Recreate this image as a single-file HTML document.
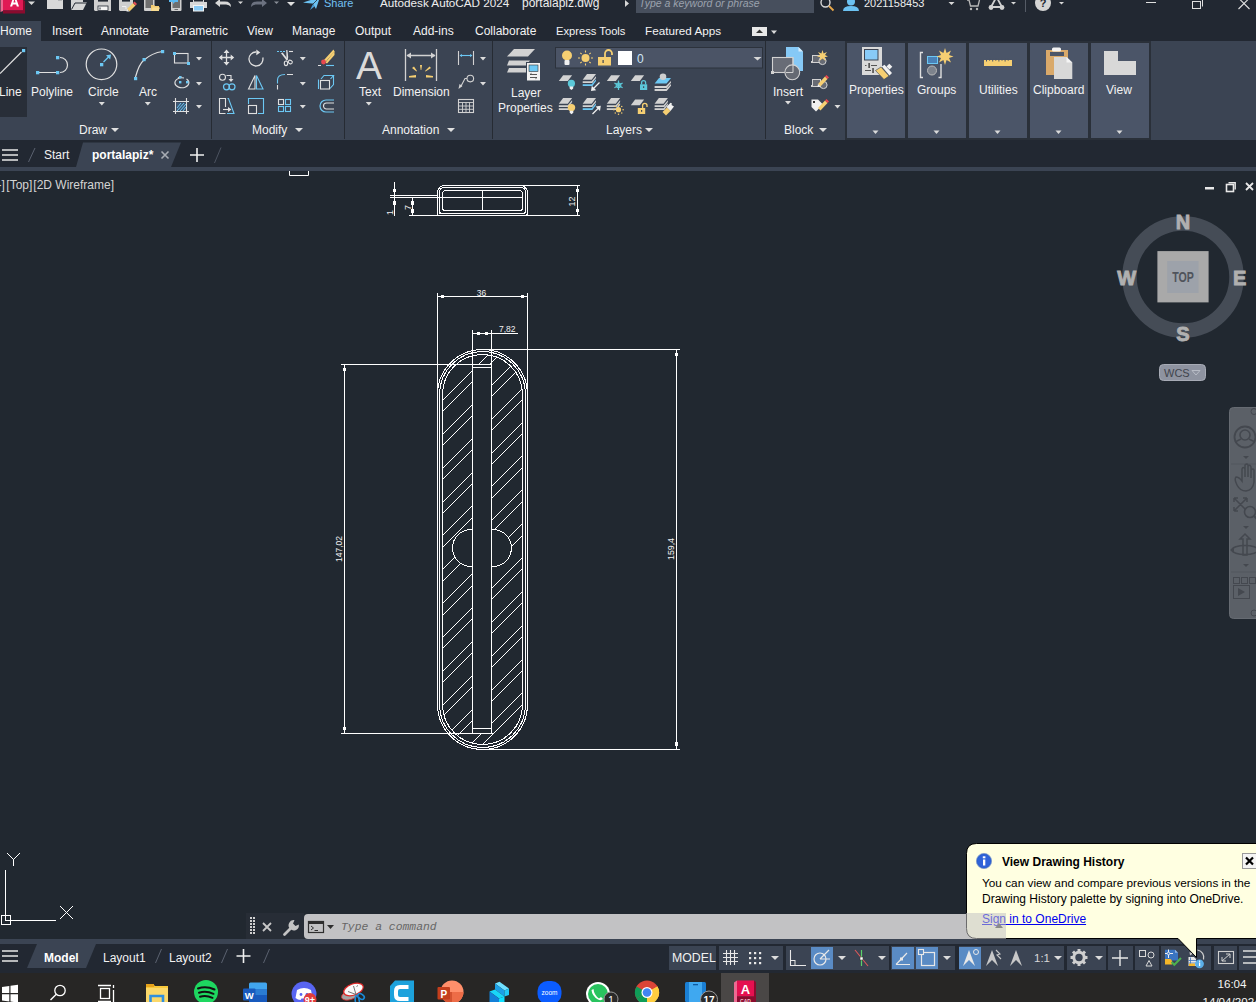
<!DOCTYPE html>
<html><head><meta charset="utf-8"><style>
html,body{margin:0;padding:0}
body{width:1256px;height:1002px;overflow:hidden;position:relative;background:#212830;font-family:"Liberation Sans",sans-serif}
.t{position:absolute;white-space:nowrap;z-index:3}
.r{position:absolute}
.s{position:absolute;overflow:visible}
</style></head><body>
<div class="r" style="left:0px;top:0px;width:1256px;height:21px;background:#222832;"></div>
<div class="r" style="left:0px;top:21px;width:1256px;height:20px;background:#222832;"></div>
<div class="r" style="left:0px;top:21px;width:41px;height:20px;background:#3b4453;"></div>
<div class="r" style="left:0px;top:41px;width:1256px;height:99px;background:#3b4453;"></div>
<div class="r" style="left:0px;top:140px;width:1256px;height:27px;background:#222832;"></div>
<div class="r" style="left:0px;top:167px;width:1256px;height:4px;background:#3b4453;"></div>
<div class="r" style="left:0px;top:171px;width:1256px;height:769px;background:#212830;"></div>
<div class="r" style="left:0px;top:939px;width:1256px;height:5px;background:#3b4453;"></div>
<div class="r" style="left:0px;top:944px;width:1256px;height:29px;background:#222832;"></div>
<div class="r" style="left:0px;top:973px;width:1256px;height:29px;background:#272625;"></div>
<div class="t" style="left:324px;top:-2.31px;font-size:11px;line-height:11px;color:#72c0f2;">Share</div>
<div class="t" style="left:380px;top:-2.90px;font-size:11.7px;line-height:11.7px;color:#eeeeee;">Autodesk AutoCAD 2024</div>
<div class="t" style="left:522px;top:-3.16px;font-size:12px;line-height:12px;color:#eeeeee;">portalapiz.dwg</div>
<div class="r" style="left:636px;top:0px;width:178px;height:13px;background:#474f5d;"></div>
<div class="t" style="left:639px;top:-1.89px;font-size:10.5px;line-height:10.5px;color:#9ba2ad;font-style:italic;">Type a keyword or phrase</div>
<div class="t" style="left:864px;top:-2.31px;font-size:11px;line-height:11px;color:#eeeeee;">2021158453</div>
<div class="t" style="left:0px;top:24.84px;font-size:12px;line-height:12px;color:#f2f2f2;">Home</div>
<div class="t" style="left:52px;top:24.84px;font-size:12px;line-height:12px;color:#f2f2f2;">Insert</div>
<div class="t" style="left:101px;top:24.84px;font-size:12px;line-height:12px;color:#f2f2f2;">Annotate</div>
<div class="t" style="left:170px;top:24.84px;font-size:12px;line-height:12px;color:#f2f2f2;">Parametric</div>
<div class="t" style="left:247px;top:24.84px;font-size:12px;line-height:12px;color:#f2f2f2;">View</div>
<div class="t" style="left:292px;top:24.84px;font-size:12px;line-height:12px;color:#f2f2f2;">Manage</div>
<div class="t" style="left:355px;top:24.84px;font-size:12px;line-height:12px;color:#f2f2f2;">Output</div>
<div class="t" style="left:413px;top:24.84px;font-size:12px;line-height:12px;color:#f2f2f2;">Add-ins</div>
<div class="t" style="left:475px;top:24.84px;font-size:12px;line-height:12px;color:#f2f2f2;">Collaborate</div>
<div class="t" style="left:556px;top:25.52px;font-size:11.2px;line-height:11.2px;color:#f2f2f2;">Express Tools</div>
<div class="t" style="left:645px;top:25.10px;font-size:11.7px;line-height:11.7px;color:#f2f2f2;">Featured Apps</div>
<div class="t" style="left:-1px;top:85.84px;font-size:12px;line-height:12px;color:#f2f2f2;">Line</div>
<div class="t" style="left:31px;top:85.84px;font-size:12px;line-height:12px;color:#f2f2f2;">Polyline</div>
<div class="t" style="left:88px;top:85.84px;font-size:12px;line-height:12px;color:#f2f2f2;">Circle</div>
<div class="t" style="left:139px;top:85.84px;font-size:12px;line-height:12px;color:#f2f2f2;">Arc</div>
<div class="t" style="left:359px;top:85.84px;font-size:12px;line-height:12px;color:#f2f2f2;">Text</div>
<div class="t" style="left:393px;top:85.84px;font-size:12px;line-height:12px;color:#f2f2f2;">Dimension</div>
<div class="t" style="left:773px;top:85.84px;font-size:12px;line-height:12px;color:#f2f2f2;">Insert</div>
<div class="t" style="left:511px;top:86.84px;font-size:12px;line-height:12px;color:#f2f2f2;">Layer</div>
<div class="t" style="left:498px;top:101.84px;font-size:12px;line-height:12px;color:#f2f2f2;">Properties</div>
<div class="t" style="left:79px;top:123.84px;font-size:12px;line-height:12px;color:#f2f2f2;">Draw</div>
<div class="t" style="left:252px;top:123.84px;font-size:12px;line-height:12px;color:#f2f2f2;">Modify</div>
<div class="t" style="left:382px;top:123.84px;font-size:12px;line-height:12px;color:#f2f2f2;">Annotation</div>
<div class="t" style="left:606px;top:123.84px;font-size:12px;line-height:12px;color:#f2f2f2;">Layers</div>
<div class="t" style="left:784px;top:123.84px;font-size:12px;line-height:12px;color:#f2f2f2;">Block</div>
<div class="r" style="left:211px;top:41px;width:1px;height:98px;background:#262b33;"></div>
<div class="r" style="left:344px;top:41px;width:1px;height:98px;background:#262b33;"></div>
<div class="r" style="left:492px;top:41px;width:1px;height:98px;background:#262b33;"></div>
<div class="r" style="left:765px;top:41px;width:1px;height:98px;background:#262b33;"></div>
<div class="r" style="left:845px;top:41px;width:62px;height:99px;background:#2a3039;"></div>
<div class="r" style="left:847px;top:43px;width:58px;height:95px;background:#4b5568;"></div>
<div class="t" style="left:849px;top:83.84px;font-size:12px;line-height:12px;color:#f2f2f2;">Properties</div>
<div class="r" style="left:906px;top:41px;width:62px;height:99px;background:#2a3039;"></div>
<div class="r" style="left:908px;top:43px;width:58px;height:95px;background:#4b5568;"></div>
<div class="t" style="left:917px;top:83.84px;font-size:12px;line-height:12px;color:#f2f2f2;">Groups</div>
<div class="r" style="left:967px;top:41px;width:62px;height:99px;background:#2a3039;"></div>
<div class="r" style="left:969px;top:43px;width:58px;height:95px;background:#4b5568;"></div>
<div class="t" style="left:979px;top:83.84px;font-size:12px;line-height:12px;color:#f2f2f2;">Utilities</div>
<div class="r" style="left:1028px;top:41px;width:62px;height:99px;background:#2a3039;"></div>
<div class="r" style="left:1030px;top:43px;width:58px;height:95px;background:#4b5568;"></div>
<div class="t" style="left:1033px;top:83.84px;font-size:12px;line-height:12px;color:#f2f2f2;">Clipboard</div>
<div class="r" style="left:1089px;top:41px;width:62px;height:99px;background:#2a3039;"></div>
<div class="r" style="left:1091px;top:43px;width:58px;height:95px;background:#4b5568;"></div>
<div class="t" style="left:1106px;top:83.84px;font-size:12px;line-height:12px;color:#f2f2f2;">View</div>
<svg class="s" style="left:0px;top:0px;z-index:1" width="1256" height="145" viewBox="0 0 1256 145"><rect x="0" y="47" width="27" height="70" fill="#282e38"/><line x1="0" y1="73.5" x2="21.5" y2="52" stroke="#e0e0e0" stroke-width="1.2"/><rect x="22" y="49" width="3.2" height="3.2" fill="#6cc8f4"/><path d="M39,72.5 H56 M60,57.5 A7.5,7.5 0 0 1 60,72.5" fill="none" stroke="#e0e0e0" stroke-width="1.2"/><rect x="36" y="71" width="3.3" height="3.3" fill="#6cc8f4"/><rect x="56" y="71" width="3.3" height="3.3" fill="#6cc8f4"/><rect x="56" y="56" width="3.3" height="3.3" fill="#6cc8f4"/><circle cx="101.5" cy="64.3" r="15.3" fill="none" stroke="#e0e0e0" stroke-width="1.2"/><rect x="100" y="63" width="3.3" height="3.3" fill="#6cc8f4"/><path d="M103.5,62 L109,56.5" stroke="#6cc8f4" stroke-width="1.2"/><path d="M111,54.5 L110.2,59.5 L106,55.3 Z" fill="#6cc8f4"/><path d="M98.8,102 H104.8 L101.8,105.5 Z" fill="#dcdcdc"/><path d="M135.5,77 Q139,64 144,60 Q152,53 162.5,51.5" fill="none" stroke="#e0e0e0" stroke-width="1.2"/><rect x="134" y="77" width="3.2" height="3.2" fill="#6cc8f4"/><rect x="142.5" y="58" width="3.2" height="3.2" fill="#6cc8f4"/><rect x="161" y="50" width="3.2" height="3.2" fill="#6cc8f4"/><path d="M144.8,102 H150.8 L147.8,105.5 Z" fill="#dcdcdc"/><rect x="174.5" y="53.5" width="13.5" height="9.5" fill="none" stroke="#e0e0e0" stroke-width="1.1"/><rect x="173" y="52" width="3" height="3" fill="#6cc8f4"/><rect x="187" y="62" width="3" height="3" fill="#6cc8f4"/><path d="M196,57 H202 L199,60.5 Z" fill="#dcdcdc"/><path d="M186.5,79 A7,5 0 1 1 184,78" fill="none" stroke="#e0e0e0" stroke-width="1.1"/><path d="M178,78 A7,5 0 0 1 182,77" fill="none" stroke="#e0e0e0" stroke-width="1.1" stroke-dasharray="2 1.5"/><rect x="179" y="76" width="2.4" height="2.4" fill="#6cc8f4"/><rect x="179" y="81" width="2.4" height="2.4" fill="#6cc8f4"/><rect x="186" y="81" width="2.4" height="2.4" fill="#6cc8f4"/><path d="M196,82 H202 L199,85.5 Z" fill="#dcdcdc"/><path d="M173,101.5 H189 M173,111.5 H189 M175.5,98 V114 M186.5,98 V114" stroke="#e0e0e0" stroke-width="1.1"/><rect x="176.5" y="102.5" width="9" height="8" fill="#3f5a78"/><path d="M177,108 L181,103 M177,111 L184,103 M180,111 L186,104 M183,111 L186,107" stroke="#6cc8f4" stroke-width="1"/><path d="M196,105 H202 L199,108.5 Z" fill="#dcdcdc"/><path d="M226.5,51 V64 M220,57.5 H233" stroke="#e0e0e0" stroke-width="1.3"/><path d="M226.5,49.5 L223.5,53 H229.5 Z M226.5,65.5 L223.5,62 H229.5 Z M218.8,57.5 L222.3,54.5 V60.5 Z M234.2,57.5 L230.7,54.5 V60.5 Z" fill="#e0e0e0"/><path d="M262.8,57.5 A7,7 0 1 1 256.2,52" fill="none" stroke="#e0e0e0" stroke-width="1.3"/><path d="M260.3,52.5 L256.3,49.6 V55.3 Z" fill="#e0e0e0"/><path d="M277,51.5 H285" stroke="#6cc8f4" stroke-width="1.1" stroke-dasharray="2 1"/><path d="M289,51.5 H293" stroke="#e0e0e0" stroke-width="1.1"/><path d="M281,53.2 L282.6,52.6 L287.8,59.2 L286.6,60.5 Z" fill="#e0e0e0"/><path d="M286.2,50 L287.4,50 L288.2,57 L287.6,60.2 L286.6,60.2 Z" fill="#e0e0e0"/><ellipse cx="286" cy="63.3" rx="1.7" ry="2.3" fill="none" stroke="#e0e0e0" stroke-width="1.1"/><ellipse cx="290.3" cy="62" rx="2.1" ry="1.7" transform="rotate(30 290.3 62)" fill="none" stroke="#e0e0e0" stroke-width="1.1"/><path d="M299.8,57 H305.8 L302.8,60.5 Z" fill="#dcdcdc"/><path d="M325.5,62.5 L334.5,51 V55 L327,63.5 Z" fill="#f6cf72"/><path d="M324,60 L333.5,49.5 L334.5,51.5 L325.5,62" fill="#f6cf72"/><circle cx="323.5" cy="62" r="2.4" fill="#e8484f"/><path d="M318,65.5 H321" stroke="#e0e0e0"/><path d="M326,65.5 H334" stroke="#6cc8f4" stroke-width="1.1"/><circle cx="222.5" cy="77.3" r="3" fill="none" stroke="#e0e0e0" stroke-width="1.1"/><path d="M226.5,75.5 H231 V80" fill="none" stroke="#e0e0e0" stroke-width="1.1"/><path d="M228.5,79 H233.5 L231,82 Z" fill="#e0e0e0"/><circle cx="226.5" cy="86.8" r="3" fill="none" stroke="#6cc8f4" stroke-width="1.2"/><circle cx="232" cy="86.8" r="3" fill="none" stroke="#6cc8f4" stroke-width="1.2"/><path d="M248.5,89 L255,75.5 V89 Z" fill="none" stroke="#e0e0e0" stroke-width="1.1"/><path d="M256.5,75.5 L263,89 H256.5 Z" fill="none" stroke="#6cc8f4" stroke-width="1.1"/><path d="M277.5,83.5 V80 Q277.5,74.5 285,74.5" fill="none" stroke="#6cc8f4" stroke-width="1.1"/><path d="M287,74.5 H293 M277.5,85 V89.5" stroke="#e0e0e0" stroke-width="1.1"/><path d="M299.8,82 H305.8 L302.8,85.5 Z" fill="#dcdcdc"/><path d="M318.5,79.5 V89 M321,79 L324,75.5 H333.5 L330.5,79 M333.5,75.5 V84.5 L330,88.5" fill="none" stroke="#6cc8f4" stroke-width="1.1"/><rect x="320.5" y="80.5" width="9" height="8.5" fill="none" stroke="#e0e0e0" stroke-width="1.1"/><path d="M225.5,113.5 H219.5 V98.5 H225.5 V107" fill="none" stroke="#e0e0e0" stroke-width="1.1"/><path d="M223,109.5 H229" stroke="#e0e0e0" stroke-width="1.1"/><path d="M231.5,109.5 L228,107 V112 Z" fill="#e0e0e0"/><path d="M227.5,98.5 H228.5 L234,113.5 H227" fill="none" stroke="#6cc8f4" stroke-width="1.1"/><path d="M248.5,104 V98.5 H263.5 V113.5 H258" fill="none" stroke="#6cc8f4" stroke-width="1.1"/><rect x="248.5" y="105.5" width="8" height="8" fill="none" stroke="#e0e0e0" stroke-width="1.1"/><rect x="278.5" y="99.5" width="5" height="5" fill="none" stroke="#e0e0e0" stroke-width="1.1"/><rect x="285.5" y="99.5" width="5" height="5" fill="none" stroke="#6cc8f4" stroke-width="1.1"/><rect x="278.5" y="106.5" width="5" height="5" fill="none" stroke="#6cc8f4" stroke-width="1.1"/><rect x="285.5" y="106.5" width="5" height="5" fill="none" stroke="#6cc8f4" stroke-width="1.1"/><path d="M299.8,105 H305.8 L302.8,108.5 Z" fill="#dcdcdc"/><path d="M334,100 H326 A6,6 0 0 0 326,112 H334" fill="none" stroke="#6cc8f4" stroke-width="1.2"/><path d="M334,103 H326.5 A3,3 0 0 0 326.5,109 H334" fill="none" stroke="#e0e0e0" stroke-width="1.1"/><text x="356" y="79" font-size="39" fill="#dadada" font-family="Liberation Sans">A</text><path d="M365.8,102 H371.8 L368.8,105.5 Z" fill="#dcdcdc"/><path d="M405.5,49 V81 M436.5,49 V81 M407,55.5 H435" stroke="#d2d2d2" stroke-width="1.3" fill="none"/><path d="M406.5,55.5 L411,52.5 V58.5 Z M435.5,55.5 L431,52.5 V58.5 Z" fill="#d2d2d2"/><g fill="#f6cf72"><path d="M420,65 L422,65 L421.3,70 L420.7,70 Z"/><path d="M412,68 L414,66.5 L417,71 L416.5,71.5 Z"/><path d="M429.5,66.5 L431,68 L425.5,71.5 L425,71 Z"/><path d="M409,76 L416,75 L416,77.5 L409,77.5 Z"/><path d="M426,75 L433,76 L433,77.5 L426,77.5 Z"/></g><path d="M458.5,51 V65 M473.5,51 V65" stroke="#d2d2d2" stroke-width="1.1"/><path d="M460,55.5 H472" stroke="#6cc8f4" stroke-width="1.1"/><path d="M459.5,55.5 L462,54 V57 Z M472.5,55.5 L470,54 V57 Z" fill="#6cc8f4"/><path d="M480,57 H486 L483,60.5 Z" fill="#dcdcdc"/><circle cx="470.3" cy="78.6" r="3.3" fill="none" stroke="#d2d2d2" stroke-width="1.1"/><path d="M467,78.5 H465 L460.5,87" fill="none" stroke="#d2d2d2" stroke-width="1.1"/><path d="M458.5,89 L459.5,84 L462.5,86 Z" fill="#d2d2d2"/><path d="M480,82 H486 L483,85.5 Z" fill="#dcdcdc"/><rect x="458.5" y="99.5" width="15" height="13" fill="none" stroke="#d2d2d2" stroke-width="1.1"/><path d="M458.5,102.5 H473.5 M458.5,106 H473.5 M458.5,109.3 H473.5 M462.5,102.5 V112.5 M466,102.5 V112.5 M469.5,102.5 V112.5" stroke="#d2d2d2" stroke-width="0.9"/><path d="M514,49 H535 L528,56.5 H507 Z" fill="#d2d2d2"/><path d="M509,60.5 H530 L526,65.5 H507 Z" fill="#d2d2d2"/><path d="M509,68 H528 L526,72.5 H507 Z" fill="#d2d2d2"/><rect x="526.5" y="62.5" width="14" height="18.5" fill="#f2f2f2" stroke="#3b4453" stroke-width="1"/><rect x="529" y="65" width="9" height="6.5" fill="#6cc8f4" stroke="#333" stroke-width="0.6"/><path d="M530,74.5 H537 M530,77.5 H537" stroke="#444" stroke-width="0.9"/><path d="M530,74.5 L531.5,73.3 M537,77.5 L535.5,78.7" stroke="#444" stroke-width="0.9"/><rect x="555.5" y="47.5" width="207" height="20.5" fill="#4b5466" stroke="#2c323c" stroke-width="1"/><circle cx="567" cy="55.5" r="5" fill="#f6cf72"/><rect x="564.5" y="60" width="5" height="5" rx="1" fill="#f0f0f0"/><circle cx="585.5" cy="58" r="4" fill="#f6cf72"/><path d="M585.5,50.5 V52.5 M585.5,63.5 V65.5 M578,58 H580 M591,58 H593 M580.3,52.8 L581.7,54.2 M589.3,61.8 L590.7,63.2 M590.7,52.8 L589.3,54.2 M581.7,61.8 L580.3,63.2" stroke="#f6cf72" stroke-width="1.1"/><rect x="598" y="57" width="13" height="8.5" fill="#f6cf72"/><path d="M605,57 V53.5 A3.5,3.5 0 0 1 612,53.5 V55" fill="none" stroke="#f6cf72" stroke-width="1.8"/><rect x="602.5" y="60" width="1.2" height="3" fill="#3b4453"/><rect x="618" y="51" width="14" height="14" fill="#ffffff"/><text x="637" y="63" font-size="12" fill="#cfe6f7" font-family="Liberation Sans">0</text><path d="M753.5,57 H761.5 L757.5,60.5 Z" fill="#d8d8d8"/><path d="M563.0999999999999,75.3 H572.0999999999999 L567.8,81.1 H558.8 Z" fill="#d2d2d2"/><circle cx="571.4" cy="83.4" r="3.6" fill="#5cc9d9"/><path d="M569.6,86.5 H573.2 V88.6 L571.4,90 L569.6,88.6 Z" fill="#f0f0f0"/><path d="M587.0,74 H596.0 L591.7,79.8 H582.7 Z" fill="#d2d2d2"/><path d="M582.7,81.3 H591.7 L596.0,76.3 V77.89999999999999 L592.4000000000001,82.89999999999999 H582.7 Z" fill="#d2d2d2"/><path d="M582.7,84.3 H591.7 L596.0,79.3 V80.89999999999999 L592.4000000000001,85.89999999999999 H582.7 Z" fill="#6cc8f4"/><path d="M599.5,82.5 L592.5,89.5" stroke="#f0f0f0" stroke-width="1.2"/><path d="M591,91 L591.8,85.8 L596.2,90.2 Z" fill="#f0f0f0"/><path d="M611.0999999999999,75.3 H620.0999999999999 L615.8,81.1 H606.8 Z" fill="#d2d2d2"/><g stroke="#5cc9d9" stroke-width="1.2"><path d="M618.5,80.5 V90 M614.4,82.9 L622.6,87.7 M622.6,82.9 L614.4,87.7"/></g><circle cx="618.5" cy="85.3" r="2.3" fill="none" stroke="#5cc9d9" stroke-width="1.1"/><path d="M635.0999999999999,75.3 H644.0999999999999 L639.8,81.1 H630.8 Z" fill="#d2d2d2"/><rect x="640" y="84.3" width="7.2" height="5.7" fill="#5cc9d9"/><path d="M641.6,84.5 V82.6 A2,2 0 0 1 645.6,82.6 V84.5" fill="none" stroke="#5cc9d9" stroke-width="1.3"/><rect x="643" y="86.3" width="1.2" height="1.6" fill="#3b4453"/><path d="M659,78 H671 L666.5,83.5 H654.6 Z" fill="#6cc8f4"/><path d="M654.6,86 H666 L671,81 V82.8 L666.7,88 H654.6 Z M654.6,89 H666 L671,84 V85.8 L666.7,91 H654.6 Z" fill="#d2d2d2"/><circle cx="663" cy="76.7" r="3.3" fill="#cfcfcf"/><path d="M563.0999999999999,98 H572.0999999999999 L567.8,103.8 H558.8 Z" fill="#d2d2d2"/><path d="M558.8,105.3 H567.8 L572.0999999999999,100.3 V101.89999999999999 L568.5,106.89999999999999 H558.8 Z" fill="#d2d2d2"/><path d="M558.8,108.3 H567.8 L572.0999999999999,103.3 V104.89999999999999 L568.5,109.89999999999999 H558.8 Z" fill="#d2d2d2"/><circle cx="571.5" cy="107.6" r="3.7" fill="#f6cf72"/><path d="M569.7,110.8 H573.3 V112.8 L571.5,114.2 L569.7,112.8 Z" fill="#f0f0f0"/><path d="M587.0,98 H596.0 L591.7,103.8 H582.7 Z" fill="#d2d2d2"/><path d="M582.7,105.3 H591.7 L596.0,100.3 V101.89999999999999 L592.4000000000001,106.89999999999999 H582.7 Z" fill="#d2d2d2"/><path d="M582.7,108.3 H591.7 L596.0,103.3 V104.89999999999999 L592.4000000000001,109.89999999999999 H582.7 Z" fill="#6cc8f4"/><path d="M592.5,114 L599.5,107" stroke="#f0f0f0" stroke-width="1.2"/><path d="M600.8,105.8 L595.6,106.6 L600,111 Z" fill="#f0f0f0"/><path d="M611.0999999999999,98 H620.0999999999999 L615.8,103.8 H606.8 Z" fill="#d2d2d2"/><path d="M606.8,105.3 H615.8 L620.0999999999999,100.3 V101.89999999999999 L616.5,106.89999999999999 H606.8 Z" fill="#d2d2d2"/><path d="M606.8,108.3 H615.8 L620.0999999999999,103.3 V104.89999999999999 L616.5,109.89999999999999 H606.8 Z" fill="#d2d2d2"/><circle cx="618.5" cy="109.7" r="2.6" fill="#f6cf72"/><circle cx="623.10" cy="109.70" r="0.75" fill="#f6cf72"/><circle cx="621.75" cy="112.95" r="0.75" fill="#f6cf72"/><circle cx="618.50" cy="114.30" r="0.75" fill="#f6cf72"/><circle cx="615.25" cy="112.96" r="0.75" fill="#f6cf72"/><circle cx="613.90" cy="109.71" r="0.75" fill="#f6cf72"/><circle cx="615.24" cy="106.45" r="0.75" fill="#f6cf72"/><circle cx="618.49" cy="105.10" r="0.75" fill="#f6cf72"/><circle cx="621.74" cy="106.44" r="0.75" fill="#f6cf72"/><path d="M635.0999999999999,99.5 H644.0999999999999 L639.8,105.3 H630.8 Z" fill="#d2d2d2"/><rect x="637.8" y="108" width="7.4" height="6" fill="#f6cf72"/><path d="M642.6,108 V105.6 A2.2,2.2 0 0 1 647,105.6 V107" fill="none" stroke="#f6cf72" stroke-width="1.3"/><rect x="641" y="110" width="1.2" height="1.8" fill="#3b4453"/><path d="M658.9,98 H667.9 L663.6,103.8 H654.6 Z" fill="#d2d2d2"/><path d="M654.6,105.3 H663.6 L667.9,100.3 V101.89999999999999 L664.3000000000001,106.89999999999999 H654.6 Z" fill="#d2d2d2"/><path d="M654.6,108.3 H663.6 L667.9,103.3 V104.89999999999999 L664.3000000000001,109.89999999999999 H654.6 Z" fill="#d2d2d2"/><path d="M662.5,112 L667,107.5 L670.5,111 L666,115.5 Z" fill="#f6cf72"/><path d="M666.5,107 L670.5,102.8 L672,103.5 L671.5,105 L674,106.5 L670.5,111 Z" fill="#f0f0f0"/><path d="M786,47 H798.5 L803,51.5 V71 H786 Z" fill="#86c9f6"/><path d="M798.5,47 V51.5 H803 Z" fill="#d5ecfb"/><rect x="772.5" y="57.5" width="20.5" height="15" fill="#686c76" stroke="#d2d2d2" stroke-width="1.1"/><circle cx="792.3" cy="72.3" r="7.4" fill="#666a73" stroke="#d2d2d2" stroke-width="1.1"/><path d="M786,72.5 H793 V57.5" fill="none" stroke="#d2d2d2" stroke-width="1"/><rect x="771" y="71" width="3" height="3" fill="#d2d2d2"/><path d="M785,101 H791 L788,104.5 Z" fill="#dcdcdc"/><rect x="812.5" y="55.5" width="8" height="7" fill="#676b74" stroke="#d2d2d2" stroke-width="1"/><circle cx="822.5" cy="61" r="3.6" fill="#676b74" stroke="#d2d2d2" stroke-width="1"/><rect x="811" y="61" width="2" height="2" fill="#d2d2d2"/><rect x="812.5" y="79.5" width="8" height="7" fill="#676b74" stroke="#d2d2d2" stroke-width="1"/><circle cx="823.5" cy="85" r="3.6" fill="#676b74" stroke="#d2d2d2" stroke-width="1"/><rect x="811" y="85" width="2" height="2" fill="#d2d2d2"/><path d="M822.5,50 L823.6,53.5 L827,52 L825,55 L828,56.5 L824.6,57.2 L825.5,61 L822.5,58.5 L819.5,61 L820.4,57.2 L817,56.5 L820,55 L818,52 L821.4,53.5 Z" fill="#f6cf72"/><path d="M818,84 L825,76.5 L827.5,79 L820.5,86.5 Z" fill="#f6cf72"/><path d="M825,76.5 L826.5,75 L829,77.5 L827.5,79 Z" fill="#e8484f"/><path d="M818,84 L817.5,87 L820.5,86.5 Z" fill="#f0f0f0"/><path d="M811.5,99.5 H818 L823,104.5 L816,111.5 L811.5,107 Z" fill="#f0f0f0"/><rect x="813" y="101" width="2" height="2" fill="#333"/><path d="M818,108 L825,100.5 L827.5,103 L820.5,110.5 Z" fill="#f6cf72"/><path d="M825,100.5 L826.5,99 L829,101.5 L827.5,103 Z" fill="#e8484f"/><path d="M834.5,105 H840.5 L837.5,108.5 Z" fill="#dcdcdc"/><rect x="862" y="47" width="20" height="28" fill="#dadada"/><rect x="864.5" y="49.5" width="13.5" height="10.5" fill="#88cbf8" stroke="#3d4452" stroke-width="1"/><path d="M865,65.5 H866.5 M871,65.5 H877 M865,70.5 H871 M876,70.5 H877" stroke="#555" stroke-width="1"/><rect x="868.3" y="63" width="1.7" height="5" fill="#555"/><rect x="872.2" y="68" width="1.7" height="5" fill="#555"/><path d="M875.5,70.5 L881,67 L889,76 L884,79.5 Z" fill="#f6cf72" stroke="#3d4452" stroke-width="0.6"/><path d="M881.8,66.5 L884.5,64.8 L892,73 L889.5,75.5 Z" fill="#f2f2f2"/><path d="M886.5,66.5 L889.3,63.8 L892.3,66.8 L889.5,69.5 Z" fill="#f2f2f2"/><path d="M923,52.5 H920.5 V77.5 H923 M941,64 V77.5 H938.5" fill="none" stroke="#e0e0e0" stroke-width="1.4"/><rect x="927.5" y="56.5" width="10" height="7" fill="#4a82b8" stroke="#6cc8f4" stroke-width="1"/><circle cx="932" cy="70.5" r="4.5" fill="#7d838d" stroke="#b8b8b8" stroke-width="1"/><path d="M945,48 L946.6,53 L951,50.5 L949,55 L953.5,56.5 L949,58 L951,62.5 L946.6,60 L945,65 L943.4,60 L939,62.5 L941,58 L936.5,56.5 L941,55 L939,50.5 L943.4,53 Z" fill="#f6cf72"/><rect x="984" y="60" width="28" height="6" fill="#f6cf72"/><rect x="986.0" y="58.5" width="1" height="3" fill="#4b5568"/><rect x="989.1" y="58.5" width="1" height="2.2" fill="#4b5568"/><rect x="992.2" y="58.5" width="1" height="3" fill="#4b5568"/><rect x="995.3" y="58.5" width="1" height="2.2" fill="#4b5568"/><rect x="998.4" y="58.5" width="1" height="3" fill="#4b5568"/><rect x="1001.5" y="58.5" width="1" height="2.2" fill="#4b5568"/><rect x="1004.6" y="58.5" width="1" height="3" fill="#4b5568"/><rect x="1007.7" y="58.5" width="1" height="2.2" fill="#4b5568"/><rect x="1046" y="50" width="22" height="25" fill="#d9a96a"/><rect x="1050" y="52" width="14" height="4" fill="#4b5568"/><rect x="1052" y="47.5" width="9" height="4" rx="1.5" fill="#f2f2f2"/><path d="M1054,57 H1066.5 L1072.3,62.5 V79 H1054 Z" fill="#d8d8d8"/><path d="M1066.5,57 V62.5 H1072.3 Z" fill="#f4f4f4"/><path d="M1104,51 H1118 V61 H1136 V75 H1104 Z" fill="#d8d8d8"/><path d="M872.5,130.5 H878.5 L875.5,134.0 Z" fill="#dadada"/><path d="M933.5,130.5 H939.5 L936.5,134.0 Z" fill="#dadada"/><path d="M994.5,130.5 H1000.5 L997.5,134.0 Z" fill="#dadada"/><path d="M1055.5,130.5 H1061.5 L1058.5,134.0 Z" fill="#dadada"/><path d="M1116.5,130.5 H1122.5 L1119.5,134.0 Z" fill="#dadada"/><rect x="752" y="27" width="15" height="9" fill="#e8e8e8"/><path d="M756,33 H763 L759.5,29.5 Z" fill="#333"/><path d="M771,30.5 H777 L774,34.0 Z" fill="#dadada"/><path d="M111,128 H119 L115,132 Z" fill="#e0e0e0"/><path d="M295,128 H303 L299,132 Z" fill="#e0e0e0"/><path d="M447,128 H455 L451,132 Z" fill="#e0e0e0"/><path d="M645,128 H653 L649,132 Z" fill="#e0e0e0"/><path d="M819,128 H827 L823,132 Z" fill="#e0e0e0"/></svg>
<svg class="s" style="left:0px;top:140px;" width="260" height="27" viewBox="0 0 260 27"><polygon points="83,2.5 181,2.5 171,27 76,27" fill="#3b4453"/></svg>
<div class="t" style="left:44px;top:148.84px;font-size:12px;line-height:12px;color:#f2f2f2;">Start</div>
<div class="t" style="left:92px;top:148.84px;font-size:12px;line-height:12px;color:#ffffff;font-weight:700;">portalapiz*</div>
<div class="t" style="left:-2.5px;top:178.84px;font-size:12px;line-height:12px;color:#d4d4d4;">-]<span style="margin-left:1.5px"></span>[Top]<span style="margin-left:1px"></span>[2D Wireframe]</div>
<svg class="s" style="left:0px;top:944px;" width="300" height="25" viewBox="0 0 300 25"><polygon points="37,0 96,0 86,24 27,24" fill="#3b4453"/></svg>
<div class="t" style="left:44px;top:951.84px;font-size:12px;line-height:12px;color:#ffffff;font-weight:700;">Model</div>
<div class="t" style="left:103px;top:951.84px;font-size:12px;line-height:12px;color:#f2f2f2;">Layout1</div>
<div class="t" style="left:169px;top:951.84px;font-size:12px;line-height:12px;color:#f2f2f2;">Layout2</div>
<svg class="s" style="left:0px;top:0px;font-family:'Liberation Sans';pointer-events:none;z-index:1" width="1256" height="1002" viewBox="0 0 1256 1002"><g shape-rendering="crispEdges"><line x1="394.5" y1="182" x2="394.5" y2="216" stroke="#ffffff" stroke-width="1"/><rect x="393" y="189" width="3" height="3" fill="#ffffff"/><rect x="393" y="201" width="3" height="4" fill="#ffffff"/><line x1="390" y1="195.5" x2="438" y2="195.5" stroke="#ffffff" stroke-width="1"/><line x1="390" y1="197.5" x2="523" y2="197.5" stroke="#ffffff" stroke-width="1"/><line x1="412.5" y1="197" x2="412.5" y2="216" stroke="#ffffff" stroke-width="1"/><rect x="411" y="201" width="3" height="4" fill="#ffffff"/><rect x="411" y="209" width="3" height="4" fill="#ffffff"/><line x1="409" y1="215.5" x2="580" y2="215.5" stroke="#ffffff" stroke-width="1"/><line x1="445" y1="185.5" x2="580" y2="185.5" stroke="#ffffff" stroke-width="1"/><line x1="577.5" y1="185" x2="577.5" y2="216" stroke="#ffffff" stroke-width="1"/><rect x="576" y="189" width="3" height="3" fill="#ffffff"/><rect x="576" y="209" width="3" height="3" fill="#ffffff"/><path d="M437.5,215.5 V193.5 Q437.5,185.5 445.5,185.5 H519.5 Q527.5,185.5 527.5,193.5 V212.5 Q527.5,215.5 524.5,215.5" stroke="#ffffff" stroke-width="1" fill="none"/><path d="M439.5,213.5 V192.5 Q439.5,187.5 444.5,187.5 H520.5 Q525.5,187.5 525.5,192.5 V210.5 Q525.5,213.5 522.5,213.5 H442.5 Q439.5,213.5 439.5,210.5" stroke="#ffffff" stroke-width="1" fill="none"/><path d="M442.5,208.5 V193.5 Q442.5,190.5 445.5,190.5 H519.5 Q522.5,190.5 522.5,193.5 V207.5 Q522.5,210.5 519.5,210.5 H445.5 Q442.5,210.5 442.5,207.5" stroke="#ffffff" stroke-width="1" fill="none"/><line x1="482.5" y1="190" x2="482.5" y2="211" stroke="#ffffff" stroke-width="1"/><text x="392.5" y="215" font-size="9" fill="#f0f0f0" text-anchor="start" transform="rotate(-90 392.5 215)">1</text><text x="410.5" y="210" font-size="9" fill="#f0f0f0" text-anchor="start" transform="rotate(-90 410.5 210)">7</text><text x="575" y="206.5" font-size="9" fill="#f0f0f0" text-anchor="start" transform="rotate(-90 575 206.5)">12</text><clipPath id="hc"><path clip-rule="evenodd" d="M442.5,394.5 A40,40 0 0 1 522.5,394.5 V704.5 A40,40 0 0 1 442.5,704.5 Z M472.5,364.5 H491.5 V733.5 H472.5 Z M472.5,529.5 H471 A18.5,18.5 0 0 0 471,566.5 H472.5 Z M491.5,529.5 H493 A18.5,18.5 0 0 1 493,566.5 H491.5 Z"/></clipPath><path clip-path="url(#hc)" d="M430,312.00 L540,202.00 M430,345.00 L540,235.00 M430,379.00 L540,269.00 M430,413.00 L540,303.00 M430,447.00 L540,337.00 M430,481.00 L540,371.00 M430,515.00 L540,405.00 M430,548.00 L540,438.00 M430,582.00 L540,472.00 M430,616.00 L540,506.00 M430,650.00 L540,540.00 M430,684.00 L540,574.00 M430,718.00 L540,608.00 M430,752.00 L540,642.00 M430,785.00 L540,675.00 M430,819.00 L540,709.00 M430,853.00 L540,743.00 M430,323.00 L540,213.00 M430,357.00 L540,247.00 M430,391.00 L540,281.00 M430,424.00 L540,314.00 M430,458.00 L540,348.00 M430,492.00 L540,382.00 M430,526.00 L540,416.00 M430,560.00 L540,450.00 M430,594.00 L540,484.00 M430,628.00 L540,518.00 M430,661.00 L540,551.00 M430,695.00 L540,585.00 M430,729.00 L540,619.00 M430,763.00 L540,653.00 M430,797.00 L540,687.00 M430,831.00 L540,721.00 M430,864.00 L540,754.00" stroke="#ffffff" stroke-width="1" fill="none"/><line x1="437.5" y1="293" x2="437.5" y2="394.5" stroke="#ffffff" stroke-width="1"/><line x1="527.5" y1="293" x2="527.5" y2="394.5" stroke="#ffffff" stroke-width="1"/><path d="M437.5,394.5 A45,45 0 0 1 527.5,394.5 V704.5 A45,45 0 0 1 437.5,704.5 Z" stroke="#ffffff" stroke-width="1" fill="none"/><path d="M439.5,394.5 A43,43 0 0 1 525.5,394.5 V704.5 A43,43 0 0 1 439.5,704.5 Z" stroke="#ffffff" stroke-width="1" fill="none"/><path d="M442.5,394.5 A40,40 0 0 1 522.5,394.5 V704.5 A40,40 0 0 1 442.5,704.5 Z" stroke="#ffffff" stroke-width="1" fill="none"/><line x1="472.5" y1="330" x2="472.5" y2="734" stroke="#ffffff" stroke-width="1"/><line x1="491.5" y1="330" x2="491.5" y2="734" stroke="#ffffff" stroke-width="1"/><line x1="472" y1="367.5" x2="492" y2="367.5" stroke="#ffffff" stroke-width="1"/><line x1="472" y1="728.5" x2="492" y2="728.5" stroke="#ffffff" stroke-width="1"/><path d="M472.5,529.5 H471 A18.5,18.5 0 0 0 471,566.5 H472.5" stroke="#ffffff" stroke-width="1" fill="none"/><path d="M491.5,529.5 H493 A18.5,18.5 0 0 1 493,566.5 H491.5" stroke="#ffffff" stroke-width="1" fill="none"/><line x1="437" y1="296.5" x2="528" y2="296.5" stroke="#ffffff" stroke-width="1"/><rect x="441" y="295" width="3" height="3" fill="#ffffff"/><rect x="521" y="295" width="3" height="3" fill="#ffffff"/><text x="481.5" y="295.5" font-size="8.5" fill="#f0f0f0" text-anchor="middle">36</text><line x1="472" y1="333.5" x2="518" y2="333.5" stroke="#ffffff" stroke-width="1"/><rect x="477" y="332" width="3" height="3" fill="#ffffff"/><rect x="485" y="332" width="3" height="3" fill="#ffffff"/><text x="499" y="331.5" font-size="8.5" fill="#f0f0f0" text-anchor="start">7,82</text><line x1="476" y1="349.5" x2="680" y2="349.5" stroke="#ffffff" stroke-width="1"/><line x1="341" y1="364.5" x2="492" y2="364.5" stroke="#ffffff" stroke-width="1"/><line x1="341" y1="733.5" x2="493" y2="733.5" stroke="#ffffff" stroke-width="1"/><line x1="476" y1="749.5" x2="680" y2="749.5" stroke="#ffffff" stroke-width="1"/><line x1="344.5" y1="364" x2="344.5" y2="734" stroke="#ffffff" stroke-width="1"/><rect x="343" y="368" width="3" height="3" fill="#ffffff"/><rect x="343" y="727" width="3" height="3" fill="#ffffff"/><line x1="676.5" y1="349" x2="676.5" y2="750" stroke="#ffffff" stroke-width="1"/><rect x="675" y="353" width="3" height="3" fill="#ffffff"/><rect x="675" y="742" width="3" height="4" fill="#ffffff"/><text x="341.5" y="562" font-size="8.5" fill="#f0f0f0" text-anchor="start" transform="rotate(-90 341.5 562)">147,02</text><text x="673.5" y="560" font-size="8.8" fill="#f0f0f0" text-anchor="start" transform="rotate(-90 673.5 560)">159,4</text><line x1="5.5" y1="870" x2="5.5" y2="921" stroke="#ffffff" stroke-width="1"/><line x1="5" y1="920.5" x2="56" y2="920.5" stroke="#ffffff" stroke-width="1"/><rect x="1.5" y="915.5" width="9" height="9" stroke="#fff" fill="none"/><path d="M7,853 L13.5,859.5 L20,853 M13.5,859.5 V866" stroke="#ffffff" stroke-width="1" fill="none"/><path d="M60,906 L73,919 M73,906 L60,919" stroke="#ffffff" stroke-width="1" fill="none"/></g></svg>
<svg class="s" style="left:1122px;top:216px;font-family:'Liberation Sans';z-index:2" width="122" height="122" viewBox="0 0 122 122"><circle cx="61" cy="61" r="53.5" fill="none" stroke="#454c56" stroke-width="14.5"/><rect x="35.4" y="35.1" width="51.2" height="51.3" fill="#a9a9a9"/><rect x="45.2" y="45" width="31.4" height="32" fill="#9da2aa"/><text x="61" y="66.2" font-size="14" font-weight="700" fill="#50545c" text-anchor="middle" transform="translate(61 0) scale(0.76 1) translate(-61 0)">TOP</text><g font-size="20" font-weight="700" fill="#b0b0b0" stroke="#b0b0b0" stroke-width="0.9" text-anchor="middle"><text x="61" y="12.8">N</text><text x="61" y="125.2">S</text><text x="4.7" y="69.4">W</text><text x="117.6" y="69.4">E</text></g></svg>
<svg class="s" style="left:1159px;top:364px;font-family:'Liberation Sans';z-index:2" width="48" height="18" viewBox="0 0 48 18"><rect x="0.5" y="0.5" width="46" height="16" rx="4" fill="#8e93a0" stroke="#a7abb5"/><text x="5" y="12.5" font-size="11" fill="#40444c">WCS</text><path d="M33,6.5 H41 L37,11 Z" fill="none" stroke="#b8bcc6"/></svg>
<svg class="s" style="left:1205px;top:182px;font-family:'Liberation Sans';z-index:2" width="50" height="10" viewBox="0 0 50 10"><rect x="0" y="5" width="9" height="2.5" fill="#e8e8e8"/><rect x="21.5" y="2.5" width="7" height="7" fill="none" stroke="#e8e8e8" stroke-width="1.6"/><path d="M23.5,0.8 H30.2 V7.5" fill="none" stroke="#e8e8e8" stroke-width="1.4"/><path d="M41,1 L48,8 M48,1 L41,8" stroke="#e8e8e8" stroke-width="1.8"/></svg>
<svg class="s" style="left:1229px;top:407px;z-index:2" width="42" height="212" viewBox="0 0 42 212"><rect x="0.5" y="0.5" width="40" height="211" rx="4" fill="#5b6067" stroke="#666b72"/><circle cx="25" cy="4.5" r="3" fill="none" stroke="#44484f"/><circle cx="16" cy="30" r="10.5" fill="none" stroke="#44484f" stroke-width="1.8"/><circle cx="16" cy="28" r="5" fill="none" stroke="#44484f" stroke-width="1.6"/><path d="M6,35 L12,32 M26,35 L20,32" stroke="#44484f" stroke-width="1.6"/><path d="M14,49 H20 L17,52 Z" fill="#44484f"/><line x1="2" y1="57" x2="40" y2="57" stroke="#52575e"/><path d="M8,78 Q5,72 7,70 Q10,70 13,74 V62 Q14,59 16,62 V70 V58 Q18,56 19,58 V70 V59 Q21,57 22,60 V71 V63 Q24,61 25,63 V75 Q24,83 17,84 Q11,84 8,78 Z" fill="none" stroke="#44484f" stroke-width="1.5"/><path d="M5,91 L18,104 M18,91 L5,104 M5,91 h4 M5,91 v4 M18,91 h-4 M18,91 v4 M5,104 h4 M5,104 v-4" stroke="#44484f" stroke-width="1.5" fill="none"/><circle cx="21" cy="105" r="5.5" fill="#5b6067" stroke="#44484f" stroke-width="1.6"/><path d="M25,109 L30,114" stroke="#44484f" stroke-width="2"/><path d="M14,119 H20 L17,122 Z" fill="#44484f"/><path d="M14,148 V132 H11 L16,127 L21,132 H18 V148 Z" fill="none" stroke="#44484f" stroke-width="1.5"/><ellipse cx="16" cy="143" rx="13" ry="4.5" fill="none" stroke="#44484f" stroke-width="1.5"/><path d="M1,143 L5,140 L5,146 Z" fill="#44484f"/><path d="M14,157 H20 L17,160 Z" fill="#44484f"/><line x1="2" y1="165" x2="40" y2="165" stroke="#52575e"/><rect x="4.5" y="170.5" width="6" height="6" fill="none" stroke="#44484f"/><rect x="12.5" y="170.5" width="6" height="6" fill="none" stroke="#44484f"/><rect x="20.5" y="170.5" width="6" height="6" fill="none" stroke="#44484f"/><rect x="4.5" y="178.5" width="16" height="13" fill="none" stroke="#44484f"/><path d="M9,181 L16,185 L9,189 Z" fill="#44484f"/><circle cx="25" cy="206" r="3" fill="none" stroke="#44484f"/></svg>
<div class="r" style="left:246px;top:913px;width:58px;height:26px;background:#272d36;z-index:3"></div>
<svg class="s" style="left:246px;top:913px;z-index:3" width="58" height="26" viewBox="0 0 58 26"><rect x="4" y="4" width="2" height="2" fill="#d0d0d0"/><rect x="4" y="7" width="2" height="2" fill="#d0d0d0"/><rect x="4" y="10" width="2" height="2" fill="#d0d0d0"/><rect x="4" y="13" width="2" height="2" fill="#d0d0d0"/><rect x="4" y="16" width="2" height="2" fill="#d0d0d0"/><rect x="4" y="19" width="2" height="2" fill="#d0d0d0"/><rect x="7" y="4" width="2" height="2" fill="#d0d0d0"/><rect x="7" y="7" width="2" height="2" fill="#d0d0d0"/><rect x="7" y="10" width="2" height="2" fill="#d0d0d0"/><rect x="7" y="13" width="2" height="2" fill="#d0d0d0"/><rect x="7" y="16" width="2" height="2" fill="#d0d0d0"/><rect x="7" y="19" width="2" height="2" fill="#d0d0d0"/><path d="M17,10 L25,18 M25,10 L17,18" stroke="#c8c8c8" stroke-width="1.8"/><path d="M38.5,21.5 L46,14" stroke="#c4c4c4" stroke-width="2.8" stroke-linecap="round"/><path d="M44.2,15.8 A5,5 0 0 1 48.5,7.2 L47,10.5 L49.5,13 L52.8,11.5 A5,5 0 0 1 44.2,15.8 Z" fill="#c4c4c4"/></svg>
<div class="r" style="left:304px;top:914px;width:702px;height:25px;background:#c2c2c4;z-index:3;border-radius:4px 0 0 4px"></div>
<svg class="s" style="left:304px;top:914px;z-index:3" width="40" height="25" viewBox="0 0 40 25"><rect x="4.5" y="7.5" width="15" height="11" fill="none" stroke="#2e2e2e" stroke-width="1.2"/><rect x="4.5" y="7.5" width="15" height="2.5" fill="#2e2e2e"/><path d="M7,12 L9.5,14 L7,16 M10.5,16.5 H14" stroke="#2e2e2e" fill="none"/><path d="M23,11 H30 L26.5,15 Z" fill="#2e2e2e"/></svg>
<div class="t" style="left:341px;top:921.85px;font-size:11.4px;line-height:11.4px;color:#666666;font-family:'Liberation Mono',monospace;font-style:italic;z-index:3;">Type a command</div>
<svg class="s" style="left:960px;top:838px;z-index:4" width="296" height="124" viewBox="0 0 296 124"><path d="M6.5,15.5 Q6.5,5.5 16.5,5.5 H300 V100.5 H236.5 L236.5,119.5 L218,100.5 H16.5 Q6.5,100.5 6.5,90.5 Z" fill="#ffffe1" stroke="#000" stroke-width="1"/><circle cx="24" cy="23" r="7.6" fill="#2a5fd0" stroke="#7a96c8" stroke-width="0.8"/><circle cx="24" cy="23" r="6.5" fill="#2f63d8"/><rect x="23" y="21.5" width="2.3" height="6" fill="#fff"/><rect x="22.8" y="18.3" width="2.6" height="2" fill="#fff"/><rect x="282.5" y="15.5" width="15" height="15" fill="#f4f4f4" stroke="#9a9a9a"/><path d="M286,19.5 L293,26.5 M293,19.5 L286,26.5" stroke="#000" stroke-width="2.2"/></svg>
<div class="t" style="left:1002px;top:855.84px;font-size:12px;line-height:12px;color:#000000;font-weight:700;z-index:4;">View Drawing History</div>
<div class="t" style="left:982px;top:878.01px;font-size:11.8px;line-height:11.8px;color:#000000;z-index:4;">You can view and compare previous versions in the</div>
<div class="t" style="left:982px;top:892.84px;font-size:12px;line-height:12px;color:#000000;z-index:4;">Drawing History palette by signing into OneDrive.</div>
<div class="t" style="left:982px;top:912.84px;font-size:12px;line-height:12px;color:#0000ee;z-index:4;text-decoration:underline;">Sign in to OneDrive</div>
<div class="r" style="left:966px;top:913px;width:40px;height:26px;background:rgba(194,194,196,0.55);z-index:5"></div>
<svg class="s" style="left:994px;top:922px;z-index:5" width="10" height="8" viewBox="0 0 10 8"><path d="M1,6 H9 L5,1 Z" fill="#8a8a8a"/></svg>
<div class="r" style="left:669px;top:946px;width:47px;height:24px;background:#3b4453;"></div>
<div class="r" style="left:719px;top:946px;width:64px;height:24px;background:#3b4453;"></div>
<div class="r" style="left:786px;top:946px;width:103px;height:24px;background:#3b4453;"></div>
<div class="r" style="left:891px;top:946px;width:64px;height:24px;background:#3b4453;"></div>
<div class="r" style="left:959px;top:946px;width:105px;height:24px;background:#3b4453;"></div>
<div class="r" style="left:1067px;top:946px;width:39px;height:24px;background:#3b4453;"></div>
<div class="r" style="left:1108px;top:946px;width:25px;height:24px;background:#3b4453;"></div>
<div class="r" style="left:1135px;top:946px;width:24px;height:24px;background:#3b4453;"></div>
<div class="r" style="left:1161px;top:946px;width:50px;height:24px;background:#3b4453;"></div>
<div class="r" style="left:1214px;top:946px;width:23px;height:24px;background:#3b4453;"></div>
<div class="r" style="left:1239px;top:946px;width:17px;height:24px;background:#3b4453;"></div>
<div class="r" style="left:811px;top:947px;width:22px;height:22px;background:#5a8bc4;"></div>
<div class="r" style="left:892px;top:947px;width:22px;height:22px;background:#5a8bc4;"></div>
<div class="r" style="left:916px;top:947px;width:22px;height:22px;background:#5a8bc4;"></div>
<div class="r" style="left:959px;top:947px;width:22px;height:22px;background:#5a8bc4;"></div>
<div class="t" style="left:672px;top:951.59px;font-size:12.3px;line-height:12.3px;color:#f2f2f2;">MODEL</div>
<svg class="s" style="left:0px;top:0px;z-index:1" width="1256" height="1002" viewBox="0 0 1256 1002"><path d="M0.5,0 H3 V11 L0.5,12 Z" fill="#ec6a92"/><rect x="3" y="0" width="20" height="10.5" fill="#e01a55"/><path d="M3,10.5 H23 V0 L25,1 V13.5 H3 Z" fill="#8a0b2e"/><path d="M10,6.5 L13,-2 H16 L19,6.5 H16.8 L16.2,4.5 H12.8 L12.2,6.5 Z M13.4,2.5 H15.6 L14.5,-1 Z" fill="#ffffff"/><path d="M28,1.5 H35 L31.5,5 Z" fill="#d8d8d8"/><path d="M47,0 H57 V-1 H63 V9 H47 Z" fill="#d8d8d8"/><rect x="58" y="-1" width="4" height="1.2" fill="#222832"/><path d="M71,0 H83 V2 H87 L83,10 H71 Z" fill="#d4d4d4"/><path d="M71.5,9.5 L75,3 H87" fill="none" stroke="#222832" stroke-width="1"/><path d="M94,0 H111 V11 H95 L94,10 Z" fill="#cfcfcf"/><rect x="98" y="0" width="10" height="1.6" fill="#222832"/><rect x="98" y="6" width="10" height="4.5" fill="#f4f4f4" stroke="#222832" stroke-width="0.8"/><rect x="99.5" y="7.5" width="1" height="2" fill="#222832"/><path d="M119,0 H133 V6 L127,11 H120 L119,10 Z" fill="#cfcfcf"/><rect x="122" y="0" width="8" height="1.6" fill="#222832"/><path d="M122,6.5 H126 V9" fill="none" stroke="#f0f0f0" stroke-width="1"/><path d="M127,9 L133,3 L135.5,5.5 L129.5,11.5 Z" fill="#f4cd72"/><path d="M133,3 L134.5,1.5 L137,4 L135.5,5.5 Z" fill="#e44c55"/><path d="M127,9 L126.5,11.5 L129.5,11.5 Z" fill="#f0f0f0"/><rect x="144" y="-1" width="10.5" height="12" rx="1" fill="#cfcfcf"/><rect x="145.5" y="0" width="7.5" height="8" fill="#6f6f6f"/><path d="M151,5 H154 L155,6 H159 V11 H151 Z" fill="#f4cd72"/><path d="M151,11 L152.5,7.5 H160 L158.5,11 Z" fill="#f8dc92"/><rect x="171" y="-1" width="10.5" height="12" rx="1" fill="#cfcfcf"/><rect x="172.5" y="0" width="7.5" height="8" fill="#6f6f6f"/><rect x="174.5" y="9" width="3.5" height="0.8" fill="#555"/><path d="M169,-1 H178 V2 H175 L173,4 V2 H169 Z" fill="#5ab8f0"/><rect x="190" y="2" width="17" height="6" fill="#d8d8d8"/><rect x="193" y="-1" width="11" height="3" fill="#d8d8d8"/><rect x="194" y="0" width="9" height="1.5" fill="#222832"/><rect x="193.5" y="5.5" width="10" height="5.5" fill="#8ccbf5" stroke="#f4f4f4" stroke-width="1"/><path d="M215,3 L220,-1 V1.5 H225 Q231,1.5 231,7 Q229,4 225,4.5 H220 V7 Z" fill="#d8d8d8"/><path d="M238,1.5 H243 L240.5,4 Z" fill="#d8d8d8"/><path d="M267,3 L262,-1 V1.5 H257 Q251,1.5 251,7 Q253,4 257,4.5 H262 V7 Z" fill="#6c7280"/><path d="M274,1.5 H279 L276.5,4 Z" fill="#8a8f98"/><path d="M287,2 H295 L291,6 Z" fill="#e0e0e0"/><path d="M303,2.5 L320,-3 L316,9 L313,4 Z" fill="#6cc2f2"/><path d="M313,4 L310,10 L314.5,6.5 Z" fill="#4a9fd8"/><path d="M306,4 L313,4 L320,-3" fill="none" stroke="#222832" stroke-width="0.8"/><path d="M625,0 L629,3.5 L625,7 Z" fill="#d8d8d8"/><circle cx="825.5" cy="2.5" r="4.5" fill="none" stroke="#d8d8d8" stroke-width="1.4"/><path d="M829,6 L833.5,10.5" stroke="#e8a84a" stroke-width="1.8"/><circle cx="851" cy="1.5" r="4" fill="#6cc2f2"/><path d="M843,11 Q843,6 851,6 Q859,6 859,11 Z" fill="#6cc2f2"/><path d="M948.5,2 H954.5 L951.5,5 Z" fill="#d8d8d8"/><path d="M967,0 H969 L970.5,6 H978 L979.5,0" fill="none" stroke="#b8b8b8" stroke-width="1.3"/><circle cx="971" cy="9" r="1.2" fill="#b8b8b8"/><circle cx="977" cy="9" r="1.2" fill="#b8b8b8"/><path d="M996.5,-3 L991,7 M996.5,-3 L1002,7 M991,7 H1002" stroke="#d0d0d0" stroke-width="1.8"/><circle cx="991" cy="7.5" r="2.4" fill="#d0d0d0"/><circle cx="1002" cy="7.5" r="2.4" fill="#d0d0d0"/><path d="M1011,2 H1016 L1013.5,4.5 Z" fill="#d8d8d8"/><rect x="1025" y="0" width="1" height="12" fill="#555b66"/><circle cx="1043" cy="3" r="8" fill="#d4d4d4"/><text x="1043" y="7" font-size="11" font-weight="700" fill="#222832" text-anchor="middle" font-family="Liberation Sans">?</text><path d="M1059,2 H1064 L1061.5,4.5 Z" fill="#d8d8d8"/><rect x="1146" y="2" width="10" height="1" fill="#e0e0e0"/><rect x="1192.5" y="1.5" width="8" height="7" fill="none" stroke="#e0e0e0" stroke-width="1"/><path d="M1194.5,-0.5 H1202.5 V6.5" fill="none" stroke="#e0e0e0" stroke-width="1"/><path d="M1238.5,-2 L1249.5,9 M1249.5,-2 L1238.5,9" stroke="#e0e0e0" stroke-width="1.1"/><path d="M2,150 H18 M2,155 H18 M2,160 H18" stroke="#e8e8e8" stroke-width="1.6"/><path d="M28.5,162 L35,148" stroke="#5b6270" stroke-width="1"/><path d="M161.5,151.5 L168.5,158.5 M168.5,151.5 L161.5,158.5" stroke="#a8acb4" stroke-width="1.6"/><path d="M197,148 V162 M190,155 H204" stroke="#f0f0f0" stroke-width="1.6"/><path d="M214.5,163 L221,147.5" stroke="#4c5360" stroke-width="1"/><path d="M289.5,171 V175.5 H308.5 V171" fill="none" stroke="#ffffff" stroke-width="1"/><path d="M2,951 H18 M2,956 H18 M2,961 H18" stroke="#e8e8e8" stroke-width="1.6"/><path d="M155.5,963 L161.5,949 M221.5,963 L227.5,949 M263.5,963 L269.5,949" stroke="#5b6270" stroke-width="1"/><path d="M243.5,949 V963 M236.5,956 H250.5" stroke="#f0f0f0" stroke-width="1.6"/></svg>
<svg class="s" style="left:0px;top:0px;z-index:2" width="1256" height="1002" viewBox="0 0 1256 1002"><path d="M726.5,950 V965 M730.5,950 V965 M734.5,950 V965 M723,953.5 H738 M723,957.5 H738 M723,961.5 H738" stroke="#e8e8e8" stroke-width="1.1"/><rect x="749" y="952" width="2.2" height="2.2" fill="#e8e8e8"/><rect x="749" y="957" width="2.2" height="2.2" fill="#e8e8e8"/><rect x="749" y="962" width="2.2" height="2.2" fill="#e8e8e8"/><rect x="754" y="952" width="2.2" height="2.2" fill="#e8e8e8"/><rect x="754" y="957" width="2.2" height="2.2" fill="#e8e8e8"/><rect x="754" y="962" width="2.2" height="2.2" fill="#e8e8e8"/><rect x="759" y="952" width="2.2" height="2.2" fill="#e8e8e8"/><rect x="759" y="957" width="2.2" height="2.2" fill="#e8e8e8"/><rect x="759" y="962" width="2.2" height="2.2" fill="#e8e8e8"/><path d="M771,956 H779 L775,960 Z" fill="#dcdcdc"/><path d="M790.5,950 V965.5 H806" fill="none" stroke="#e8e8e8" stroke-width="1.1"/><rect x="790.5" y="960.5" width="4.5" height="5" fill="none" stroke="#e8e8e8" stroke-width="1"/><circle cx="820" cy="959" r="6" fill="none" stroke="#e8e8e8" stroke-width="1.2"/><path d="M820,959 L829,950 M820,959 H830" stroke="#e8e8e8" stroke-width="1.2"/><path d="M838,956 H846 L842,960 Z" fill="#dcdcdc"/><path d="M855,950 L868,966" stroke="#e05a5a" stroke-width="1.1"/><path d="M861.5,950 V966" stroke="#5ad06a" stroke-width="1.2"/><rect x="860" y="957" width="3" height="3" fill="#fff" stroke="#333" stroke-width="0.5"/><path d="M878,956 H886 L882,960 Z" fill="#dcdcdc"/><path d="M896,964.5 H910 M896,964.5 L907,953" stroke="#e8e8e8" stroke-width="1.2" fill="none"/><rect x="900" y="957.5" width="3" height="3" fill="#e8e8e8"/><rect x="921.5" y="952.5" width="13" height="13" fill="none" stroke="#e8e8e8" stroke-width="1.2"/><rect x="918.5" y="949.5" width="5" height="5" fill="#5a8bc4" stroke="#e8e8e8" stroke-width="1.1"/><path d="M943,956 H951 L947,960 Z" fill="#dcdcdc"/><path d="M963,966 L969,950 L975,966 L969,960 Z" fill="#e8e8e8"/><circle cx="976" cy="952" r="2.5" fill="none" stroke="#e8e8e8" stroke-width="1"/><path d="M986,966 L992,950 L998,966 L992,960 Z" fill="#c8c8c8"/><path d="M996,950 L1000,954 L997,955 L1001,959" fill="none" stroke="#c8c8c8" stroke-width="1.1"/><path d="M1010,966 L1016,950 L1022,966 L1016,960 Z" fill="#c8c8c8"/><text x="1034" y="962" font-size="11.5" fill="#d8d8d8" font-family="Liberation Sans">1:1</text><path d="M1054,956 H1062 L1058,960 Z" fill="#dcdcdc"/><circle cx="1079" cy="957.5" r="5.2" fill="none" stroke="#d0d0d0" stroke-width="3"/><rect x="1077.5" y="949" width="3" height="3.5" fill="#d0d0d0" transform="rotate(0 1079 957.5)"/><rect x="1077.5" y="949" width="3" height="3.5" fill="#d0d0d0" transform="rotate(45 1079 957.5)"/><rect x="1077.5" y="949" width="3" height="3.5" fill="#d0d0d0" transform="rotate(90 1079 957.5)"/><rect x="1077.5" y="949" width="3" height="3.5" fill="#d0d0d0" transform="rotate(135 1079 957.5)"/><rect x="1077.5" y="949" width="3" height="3.5" fill="#d0d0d0" transform="rotate(180 1079 957.5)"/><rect x="1077.5" y="949" width="3" height="3.5" fill="#d0d0d0" transform="rotate(225 1079 957.5)"/><rect x="1077.5" y="949" width="3" height="3.5" fill="#d0d0d0" transform="rotate(270 1079 957.5)"/><rect x="1077.5" y="949" width="3" height="3.5" fill="#d0d0d0" transform="rotate(315 1079 957.5)"/><path d="M1095,956 H1103 L1099,960 Z" fill="#dcdcdc"/><path d="M1120,950 V966 M1112,958 H1128" stroke="#e8e8e8" stroke-width="1.4"/><rect x="1139.5" y="950.5" width="6" height="6" fill="none" stroke="#d8d8d8"/><circle cx="1151" cy="955" r="3" fill="none" stroke="#d8d8d8"/><path d="M1146,966 L1149,960.5 L1152,966 Z" fill="none" stroke="#d8d8d8"/><path d="M1165,949.8 H1175 L1178,952.8 V960.5 H1165 Z" fill="#3a74c0"/><path d="M1175,949.8 L1178,952.8 H1175 Z" fill="#8fb4e0"/><path d="M1168.5,949.5 V958 M1165,953.5 H1173" stroke="#f0f0f0" stroke-width="1"/><circle cx="1168.5" cy="953.5" r="1.3" fill="#3a74c0" stroke="#f0f0f0" stroke-width="0.8"/><path d="M1165,959 H1170.5 L1172,960.5 V964.5 H1165 Z" fill="#f4b62a"/><path d="M1171.5,962 L1174.3,964.8 L1181,958" fill="none" stroke="#4cb050" stroke-width="2"/><path d="M1188.5,957 H1194 L1196,959 V966 H1188.5 Z" fill="#e8e8e8"/><path d="M1190.5,957.5 V966 M1188.5,960.5 H1196 M1188.5,963 H1196" stroke="#3a74c0" stroke-width="0.8"/><rect x="1189" y="963.5" width="6" height="2.5" fill="#f4b62a"/><path d="M1197.5,950 A7.5,7.5 0 0 1 1203.5,959.5" fill="none" stroke="#d0d0d0" stroke-width="1.2"/><path d="M1189.5,952 L1193,953.5 L1190,955.5 Z" fill="#c8c8c8"/><circle cx="1199.5" cy="963.8" r="4.4" fill="#5aaee8"/><rect x="1199" y="962.5" width="1.2" height="3.5" fill="#fff"/><rect x="1199" y="960.6" width="1.2" height="1.2" fill="#fff"/><rect x="1218.5" y="951.5" width="15" height="12" fill="none" stroke="#d0d0d0" stroke-width="1.1"/><path d="M1222,961 L1230,954 M1226,954 H1230 V958 M1222,957 V961 H1226" fill="none" stroke="#d0d0d0" stroke-width="1"/><path d="M1243,951 H1256 M1243,957 H1256 M1243,963 H1256" stroke="#e0e0e0" stroke-width="1.6"/></svg>
<div class="r" style="left:721px;top:973px;width:48px;height:29px;background:#4a4746;"></div>
<svg class="s" style="left:0px;top:0px;z-index:2" width="1256" height="1002" viewBox="0 0 1256 1002"><path d="M2,987 L9.3,986 V993 H2 Z M10.5,985.8 L18,984.7 V993 H10.5 Z M2,994.3 H9.3 V1001.5 L2,1000.5 Z M10.5,994.3 H18 V1002.5 L10.5,1001.6 Z" fill="#ffffff"/><circle cx="60" cy="990.5" r="5.2" fill="none" stroke="#ffffff" stroke-width="1.3"/><path d="M56.3,994.2 L50.5,1000" stroke="#ffffff" stroke-width="1.4"/><path d="M98,985.5 H111 M98,1001.5 H111" stroke="#fff" stroke-width="1.3"/><rect x="100.5" y="988.5" width="9" height="10" fill="none" stroke="#fff" stroke-width="1.3"/><path d="M113.5,985 V988 M113.5,990 V1002" stroke="#fff" stroke-width="1.3"/><path d="M146,984 H153 L155,986 H168 V1002 H146 Z" fill="#f8c83a"/><rect x="146" y="984" width="8" height="3" fill="#e6a21a"/><rect x="146" y="988" width="22" height="14" fill="#fbd86a"/><path d="M150.5,1002 V996 H163 V1002" fill="none" stroke="#2f8fe0" stroke-width="2.6"/><circle cx="206" cy="992" r="12" fill="#1ed760"/><path d="M198,988.5 Q206,985.5 214.5,989.5 M199,992.8 Q206,990.5 213.5,993.8 M200,996.8 Q206,995 212.5,997.8" fill="none" stroke="#111" stroke-width="2" stroke-linecap="round"/><rect x="249" y="982.5" width="18" height="20" rx="1.5" fill="#41a5ee"/><rect x="249" y="989" width="18" height="6" fill="#2b7cd3"/><rect x="249" y="995" width="18" height="7" fill="#185abd"/><rect x="243" y="988.5" width="12.5" height="12" rx="1" fill="#185abd"/><text x="249.3" y="998.5" font-size="9.5" font-weight="700" fill="#fff" text-anchor="middle" font-family="Liberation Sans">W</text><circle cx="304" cy="994" r="12.5" fill="#5865f2"/><path d="M297,990 Q304,986 311,990 L312.5,998 Q310,1000 307.5,1000 L306.5,998.5 H301.5 L300.5,1000 Q298,1000 295.5,998 Z" fill="#fff"/><circle cx="301" cy="994.5" r="1.4" fill="#5865f2"/><circle cx="307" cy="994.5" r="1.4" fill="#5865f2"/><circle cx="310" cy="999.5" r="6.5" fill="#e23b3b"/><text x="310" y="1003" font-size="9" font-weight="700" fill="#fff" text-anchor="middle" font-family="Liberation Sans">9+</text><ellipse cx="350" cy="995" rx="8.8" ry="4.6" transform="rotate(-18 350 995)" fill="#a4a4a4" stroke="#d83030" stroke-width="0.8"/><ellipse cx="353.5" cy="989.5" rx="10.2" ry="5.6" transform="rotate(-20 353.5 989.5)" fill="#fafafa" stroke="#e02828" stroke-width="1.2"/><path d="M348,991.5 L356,994.5 M353.5,986 L356,994.5 M356.5,986.5 L358,985.5" stroke="#666" stroke-width="0.9" fill="none"/><ellipse cx="361" cy="996.5" rx="3.6" ry="2.4" transform="rotate(35 361 996.5)" fill="none" stroke="#1a8ad8" stroke-width="1.6"/><path d="M356.5,995 Q354.5,998 355.5,1002 M358.5,997 L359.5,1002" fill="none" stroke="#1a8ad8" stroke-width="1.6"/><path d="M395,980.5 H414 V1002 H390 V986 Z" fill="#1da2dc"/><path d="M408.5,987 H400 Q396,987 396,991 V995 Q396,999 400,999 H408.5" fill="none" stroke="#fff" stroke-width="4"/><circle cx="452" cy="992" r="11.5" fill="#ff8f6b"/><path d="M452,992 V1003.5 A11.5,11.5 0 0 1 440.5,992 Z" fill="#d35230"/><path d="M452,992 H463.5 A11.5,11.5 0 0 1 452,1003.5 Z" fill="#ed6c47"/><rect x="437.5" y="987" width="12.5" height="12.5" rx="1" fill="#c43e1c"/><text x="443.8" y="997.5" font-size="10" font-weight="700" fill="#fff" text-anchor="middle" font-family="Liberation Sans">P</text><path d="M495,983.5 L499.5,981.7 L509,988.5 L504.5,990.5 Z" fill="#6fe0ff"/><path d="M495,983.5 L504.5,990.5 V996.5 L495,989.5 Z" fill="#1c9fe6"/><path d="M504.5,990.5 L509,988.5 V995 L504.5,996.5 Z" fill="#22c8f5"/><path d="M489.5,991.5 L495,989.5 L504.5,996.5 L499,998.5 Z" fill="#19d6f8"/><path d="M489.5,991.5 L499,998.5 V1002 H489.5 Z" fill="#1380d8"/><path d="M499,998.5 L504.5,996.5 V1002 H499 Z" fill="#10e0ff"/><rect x="537.5" y="981" width="24" height="23" rx="10" fill="#0b5cff"/><text x="549.5" y="995" font-size="6.5" fill="#fff" text-anchor="middle" font-family="Liberation Sans">zoom</text><circle cx="598" cy="994" r="12" fill="#ffffff"/><circle cx="598" cy="994" r="10" fill="#29c35f"/><path d="M593.5,989 Q594,995 599,998.5 L601,997 L603,999 Q601,1001 598,999.5 Q592,996 591.5,990 Z" fill="#fff"/><circle cx="611" cy="999" r="7" fill="#2a2a2a" stroke="#9a9a9a" stroke-width="1"/><text x="611" y="1003.5" font-size="10" fill="#fff" text-anchor="middle" font-family="Liberation Sans">1</text><circle cx="647" cy="992.5" r="12" fill="#db4437"/><path d="M647,992.5 L657.4,998.5 A12,12 0 0 1 636.6,998.5 Z" fill="#0f9d58"/><path d="M647,992.5 L636.6,998.5 A12,12 0 0 1 636.6,986.5 Z" fill="#0f9d58"/><path d="M647,992.5 L657.4,986.5 A12,12 0 0 1 647,1004.5 Z" fill="#ffcd40"/><path d="M647,992.5 L657.4,986.5 A12,12 0 0 1 657.4,998.5 Z" fill="#ffcd40"/><circle cx="647" cy="992.5" r="5.5" fill="#fff"/><circle cx="647" cy="992.5" r="4.3" fill="#4285f4"/><rect x="685" y="982" width="21" height="20" rx="1.5" fill="#1a7fd4"/><rect x="689" y="982" width="13" height="20" fill="#3fa8f0"/><rect x="693" y="984" width="5" height="1.3" fill="#0e5aa0"/><circle cx="709" cy="999.5" r="8.5" fill="#2a2a2a" stroke="#9a9a9a" stroke-width="1"/><text x="709" y="1004" font-size="10" font-weight="700" fill="#fff" text-anchor="middle" font-family="Liberation Sans">17</text><path d="M734,982.5 L737,980.5 V1002 H734 Z" fill="#ec6a92"/><rect x="737" y="980.5" width="17" height="16" fill="#e51050"/><path d="M737,996.5 H754 V980.5 L756,982 V1002 H737 Z" fill="#8a0b2e"/><text x="745.5" y="994" font-size="13" font-weight="700" fill="#fff" text-anchor="middle" font-family="Liberation Sans">A</text><text x="745.5" y="1002.5" font-size="5" font-weight="700" fill="#f0c0cc" text-anchor="middle" font-family="Liberation Sans">CAD</text></svg>
<div class="t" style="left:1217.5px;top:978.48px;font-size:11.6px;line-height:11.6px;color:#f4f4f4;">16:04</div>
<div class="t" style="left:1202.5px;top:996.18px;font-size:11.6px;line-height:11.6px;color:#f4f4f4;">14/04/2024</div>
</body></html>
